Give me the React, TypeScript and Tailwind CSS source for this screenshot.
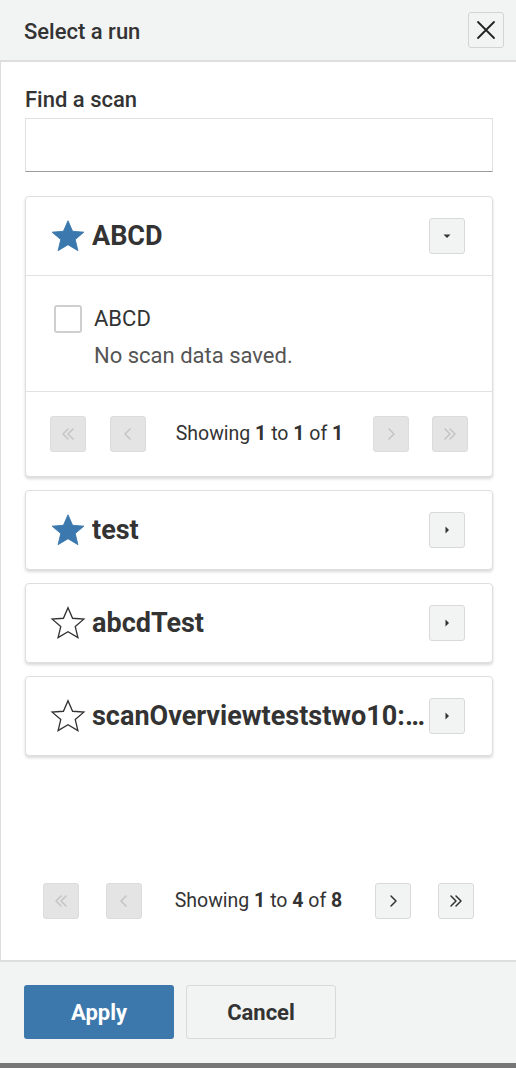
import React from 'react';

/**
 * Small inline icons
 */
const Star = ({ filled }: { filled: boolean }) => (
  <svg width={36} height={34} viewBox="0 0 24 23" className="shrink-0 mr-[6px]">
    <path
      d="M12 1.2l3.1 7.1 7.6.6-5.8 5 1.8 7.5L12 17.4l-6.7 4 1.8-7.5-5.8-5 7.6-.6z"
      fill={filled ? '#3b78ad' : 'none'}
      stroke={filled ? '#3b78ad' : '#333'}
      strokeWidth={filled ? 0.6 : 0.9}
      strokeLinejoin="miter"
    />
  </svg>
);

const Caret = ({ dir }: { dir: 'down' | 'right' }) => (
  <svg width={10} height={10} viewBox="0 0 10 10">
    {dir === 'down' ? <path d="M1.5 3.5h7L5 7z" fill="#333" /> : <path d="M3.5 1.5v7L7 5z" fill="#333" />}
  </svg>
);

const Chevron = ({ kind }: { kind: 'first' | 'prev' | 'next' | 'last' }) => {
  const paths: Record<string, string[]> = {
    first: ['M10 5l-5 5 5 5', 'M15 5l-5 5 5 5'],
    prev: ['M12 5l-5 5 5 5'],
    next: ['M8 5l5 5-5 5'],
    last: ['M5 5l5 5-5 5', 'M10 5l5 5-5 5'],
  };
  return (
    <svg width={20} height={20} viewBox="0 0 20 20" fill="none" stroke="currentColor" strokeWidth={1.5} strokeLinecap="round" strokeLinejoin="round">
      {paths[kind].map((d, i) => (
        <path key={i} d={d} />
      ))}
    </svg>
  );
};

const PageBtn = ({ kind, disabled }: { kind: 'first' | 'prev' | 'next' | 'last'; disabled?: boolean }) => (
  <button
    className={`w-9 h-9 rounded-[3px] border flex items-center justify-center ${
      disabled ? 'bg-[#e4e4e4] border-[#dcdcdc] text-[#c4c4c4]' : 'bg-[#f2f3f3] border-[#d9d9d9] text-[#333]'
    }`}
  >
    <Chevron kind={kind} />
  </button>
);

const Showing = ({ from, to, total }: { from: number; to: number; total: number }) => (
  <span className="text-[19.5px] text-[#333]">
    Showing <b className="font-bold">{from}</b> to <b className="font-bold">{to}</b> of <b className="font-bold">{total}</b>
  </span>
);

interface RunCardProps {
  name: string;
  starred: boolean;
  open?: boolean;
}

const RunCard: React.FC<RunCardProps> = ({ name, starred, open }) => (
  <div className="bg-white border border-[#dedede] rounded-[4px] shadow-[0_2px_3px_rgba(0,0,0,0.15)]">
    <div className="h-[78px] flex items-center pl-[24px] pr-[27px]">
      <Star filled={starred} />
      <span className="flex-1 min-w-0 truncate text-[27px] font-bold text-[#333]">{name}</span>
      <button className="w-9 h-9 shrink-0 ml-[2px] rounded-[3px] border border-[#d9d9d9] bg-[#f2f3f3] flex items-center justify-center">
        <Caret dir={open ? 'down' : 'right'} />
      </button>
    </div>
    {open && (
      <>
        <div className="border-t border-[#e2e2e2] h-[116px] pl-[28px] pt-[29px]">
          <div className="flex items-center gap-3">
            <span className="w-[28px] h-[28px] rounded-[3px] border-2 border-[#cfcfcf] bg-white" />
            <span className="text-[22px] leading-7 text-[#333]">ABCD</span>
          </div>
          <div className="pl-[40px] mt-[9px] text-[22px] leading-7 text-[#555]">No scan data saved.</div>
        </div>
        <div className="border-t border-[#e2e2e2] h-[85px] flex items-center px-6">
          <div className="flex gap-6">
            <PageBtn kind="first" disabled />
            <PageBtn kind="prev" disabled />
          </div>
          <div className="flex-1 text-center">
            <Showing from={1} to={1} total={1} />
          </div>
          <div className="flex gap-[23px]">
            <PageBtn kind="next" disabled />
            <PageBtn kind="last" disabled />
          </div>
        </div>
      </>
    )}
  </div>
);

const App: React.FC = () => {
  const runs: RunCardProps[] = [
    { name: 'ABCD', starred: true, open: true },
    { name: 'test', starred: true },
    { name: 'abcdTest', starred: false },
    { name: 'scanOverviewteststwo10:00:00', starred: false },
  ];

  return (
    <div className="w-full h-[1068px] flex flex-col bg-white font-['Roboto',sans-serif]">
      {/* Header */}
      <div className="h-[62px] shrink-0 bg-[#f2f3f3] border-b-2 border-[#dedede] flex items-center pl-6 pr-3">
        <h1 className="flex-1 text-[22px] font-medium text-[#333] pt-[2px]">Select a run</h1>
        <button className="w-9 h-9 rounded-[3px] border border-[#d4d4d4] flex items-center justify-center text-[#222]">
          <svg width={22} height={22} viewBox="0 0 22 22" stroke="currentColor" strokeWidth={1.8} strokeLinecap="round">
            <path d="M3 3l16 16M19 3L3 19" />
          </svg>
        </button>
      </div>

      {/* Body */}
      <div className="flex-1 flex flex-col border-l border-[#dcdcdc] border-b-2 border-b-[#dedede] pl-6 pr-[23px] pt-[26px] pb-[41px]">
        <label className="text-[22px] leading-6 font-medium text-[#333]">Find a scan</label>
        <input className="mt-[6px] h-[54px] w-full border border-[#e0e0e0] border-b-[#9a9a9a] bg-white outline-none" />

        <div className="mt-[24px] flex flex-col gap-[13px]">
          {runs.map((run) => (
            <RunCard key={run.name} {...run} />
          ))}
        </div>

        <div className="mt-auto flex items-center pl-[18px] pr-[19px]">
          <div className="flex gap-[27px]">
            <PageBtn kind="first" disabled />
            <PageBtn kind="prev" disabled />
          </div>
          <div className="flex-1 text-center">
            <Showing from={1} to={4} total={8} />
          </div>
          <div className="flex gap-[27px]">
            <PageBtn kind="next" />
            <PageBtn kind="last" />
          </div>
        </div>
      </div>

      {/* Footer */}
      <div className="h-[101px] shrink-0 bg-[#f2f3f3] flex items-start gap-3 px-6 pt-[23px]">
        <button className="w-[150px] h-[54px] rounded-[3px] bg-[#3c78ab] text-white text-[22px] font-bold">Apply</button>
        <button className="w-[150px] h-[54px] rounded-[3px] bg-[#f2f3f3] border border-[#d9d9d9] text-[#333] text-[22px] font-bold">Cancel</button>
      </div>
      <div className="h-[5px] shrink-0 bg-[#767676]" />
    </div>
  );
};

export default App;
